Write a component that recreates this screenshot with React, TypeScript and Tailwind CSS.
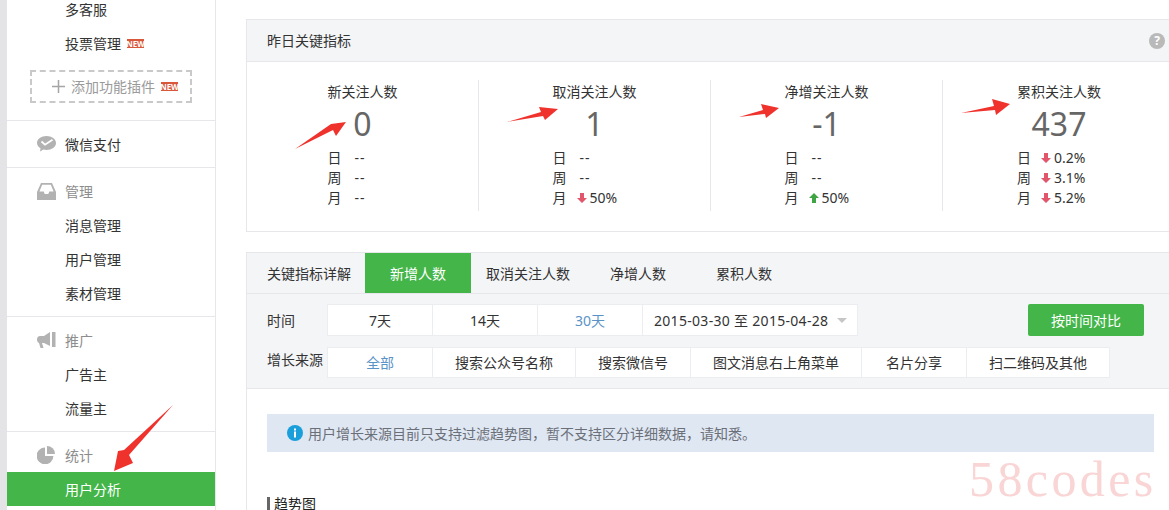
import React from 'react';

const fontStack = { fontFamily: '"Noto Sans", "Noto Sans CJK SC", sans-serif' };

const NewBadge: React.FC = () => (
  <span className="ml-[6px] inline-flex h-[9px] w-[17px] items-center justify-center bg-[#d9573a] text-[8px] font-bold leading-[9px] text-white">
    NEW
  </span>
);

const MenuRow: React.FC<{ label: string; badge?: boolean }> = ({ label, badge }) => (
  <div className="flex h-[34px] items-center pl-[58px] text-[14px] text-[#333]">
    {label}
    {badge && <NewBadge />}
  </div>
);

const GroupRow: React.FC<{ label: string; icon: React.ReactNode; dark?: boolean; className?: string }> = ({
  label,
  icon,
  dark,
  className,
}) => (
  <div className={`flex items-center pl-[30px] text-[14px] ${dark ? 'text-[#333]' : 'text-[#8d8d8d]'} ${className ?? 'h-[34px]'}`}>
    <span className="flex w-[28px] items-center">{icon}</span>
    {label}
  </div>
);

const PayIcon = (
  <svg width="19" height="16" viewBox="0 0 19 16" fill="#b2b2b2">
    <path d="M9.5 0C4.3 0 0 3 0 6.9c0 2.2 1.4 4.100 3.500 5.400L3 15.500l3.400-2c1 .3 2 .4 3.100.4 5.200 0 9.500-3.100 9.500-7S14.700 0 9.500 0Z" />
    <path d="M4.500 5.500 8 8.700l7.500-5" fill="none" stroke="#fff" strokeWidth="1.800" />
  </svg>
);

const InboxIcon = (
  <svg width="19" height="17" viewBox="0 0 19 17" fill="#b2b2b2">
    <path d="M4 0h11l4 9v8H0V9L4 0Zm1.200 1.800L2.400 8.500h4.300l1 2.500h3.600l1-2.500h4.300l-2.800-6.700H5.200Z" />
  </svg>
);

const MegaphoneIcon = (
  <svg width="19" height="17" viewBox="0 0 19 17" fill="#b2b2b2">
    <path d="M13 0v14L7 11H5l1.500 5H3.500L2 11C.8 10.700 0 9.300 0 7.500 0 5.500 1.200 4 3 4h4l6-4Z" />
    <rect x="15" y="0" width="3.500" height="15" />
  </svg>
);

const PieIcon = (
  <svg width="18" height="18" viewBox="0 0 18 18" fill="#b2b2b2">
    <path d="M8 1.500v8.500h8.400A8.400 8.400 0 1 1 8 1.500Z" />
    <path d="M10 0a8 8 0 0 1 8 8h-8V0Z" />
  </svg>
);

const Arrow: React.FC<{ dir: 'up' | 'down' }> = ({ dir }) => (
  <svg width="10" height="10" viewBox="0 0 10 10" fill={dir === 'up' ? '#3fa544' : '#e2566c'} className="shrink-0">
    {dir === 'up' ? <path d="M5 0l5 5H7v5H3V5H0l5-5Z" /> : <path d="M3 0h4v5h3l-5 5-5-5h3V0Z" />}
  </svg>
);

type Stat = { label: string; value: string; dir?: 'up' | 'down' };

const metrics: { title: string; value: string; stats: Stat[] }[] = [
  {
    title: '新关注人数',
    value: '0',
    stats: [
      { label: '日', value: '--' },
      { label: '周', value: '--' },
      { label: '月', value: '--' },
    ],
  },
  {
    title: '取消关注人数',
    value: '1',
    stats: [
      { label: '日', value: '--' },
      { label: '周', value: '--' },
      { label: '月', value: '50%', dir: 'down' },
    ],
  },
  {
    title: '净增关注人数',
    value: '-1',
    stats: [
      { label: '日', value: '--' },
      { label: '周', value: '--' },
      { label: '月', value: '50%', dir: 'up' },
    ],
  },
  {
    title: '累积关注人数',
    value: '437',
    stats: [
      { label: '日', value: '0.2%', dir: 'down' },
      { label: '周', value: '3.1%', dir: 'down' },
      { label: '月', value: '5.2%', dir: 'down' },
    ],
  },
];

const rangeTabs = [
  { label: '7天', width: 'w-[105px]' },
  { label: '14天', width: 'w-[105px]' },
  { label: '30天', width: 'w-[105px]', active: true },
];

const sourceTabs = [
  { label: '全部', width: 'w-[105px]', active: true },
  { label: '搜索公众号名称', width: 'w-[143px]' },
  { label: '搜索微信号', width: 'w-[115px]' },
  { label: '图文消息右上角菜单', width: 'w-[171px]' },
  { label: '名片分享', width: 'w-[105px]' },
  { label: '扫二维码及其他', width: 'w-[143px]' },
];

export default function App() {
  return (
    <div className="relative flex h-[510px] w-[1169px] overflow-hidden bg-white" style={fontStack}>
      <div className="w-[7px] shrink-0 bg-[#e4e4e6]" />

      {/* sidebar, scrolled a little so the first row is cut off */}
      <aside className="-mt-[8px] w-[209px] shrink-0 border-r border-[#e7e7eb]">
        <div className="h-[129px] border-b border-[#e7e7eb]">
          <MenuRow label="多客服" />
          <MenuRow label="投票管理" badge />
          <div className="mx-[23px] mt-[10px] flex h-[33px] items-center border-2 border-dashed border-[#c9c9c9] pl-[20px] text-[14px] text-[#9a9a9a]">
            <svg width="13" height="13" viewBox="0 0 13 13" stroke="#a5a5a5" strokeWidth="1.500" className="mr-[6px] shrink-0">
              <path d="M6.500 0v13M0 6.500h13" />
            </svg>
            添加功能插件
            <NewBadge />
          </div>
        </div>
        <div className="border-b border-[#e7e7eb]">
          <GroupRow label="微信支付" icon={PayIcon} dark className="h-[46px]" />
        </div>
        <div className="h-[149px] border-b border-[#e7e7eb] pt-[6px]">
          <GroupRow label="管理" icon={InboxIcon} />
          <MenuRow label="消息管理" />
          <MenuRow label="用户管理" />
          <MenuRow label="素材管理" />
        </div>
        <div className="h-[115px] border-b border-[#e7e7eb] pt-[6px]">
          <GroupRow label="推广" icon={MegaphoneIcon} />
          <MenuRow label="广告主" />
          <MenuRow label="流量主" />
        </div>
        <div className="pt-[6px]">
          <GroupRow label="统计" icon={PieIcon} />
          <div className="flex h-[34px] items-center bg-[#44b549] pl-[58px] text-[14px] text-white">用户分析</div>
        </div>
      </aside>

      <main className="min-w-0 flex-1 overflow-hidden pl-[30px] pt-[19px]">
        <section className="h-[213px] w-[940px] border border-[#e7e7eb]">
          <div className="flex h-[42px] items-center justify-between border-b border-[#e7e7eb] bg-[#f4f5f7] pl-[20px] text-[14px] text-[#333]">
            昨日关键指标
            <span className="mr-[20px] flex h-[16px] w-[16px] items-center justify-center rounded-full bg-[#b9b9b9] text-[12px] font-bold leading-none text-white">
              ?
            </span>
          </div>
          <div className="mt-[18px] flex">
            {metrics.map((m, i) => (
              <div
                key={m.title}
                className={`flex h-[131px] w-[232px] shrink-0 justify-center ${i < 3 ? 'border-r border-[#e7e7eb]' : ''}`}
              >
                <div className="pt-[1px] text-[14px] text-[#333]">
                  <div className="h-[22px] leading-[22px]">{m.title}</div>
                  <div className="h-[41px] text-center text-[32px] leading-[41px] text-[#666]">{m.value}</div>
                  <div className="mt-[4px]">
                    {m.stats.map((s) => (
                      <div key={s.label} className="flex h-[20px] items-center leading-[20px]">
                        <span className="w-[24px]">{s.label}</span>
                        {s.dir ? (
                          <>
                            <Arrow dir={s.dir} />
                            <span className="ml-[3px]">{s.value}</span>
                          </>
                        ) : (
                          <span className="ml-[3px] tracking-[1px]">{s.value}</span>
                        )}
                      </div>
                    ))}
                  </div>
                </div>
              </div>
            ))}
          </div>
        </section>

        <section className="mt-[20px] w-[940px] border border-b-0 border-[#e7e7eb]">
          <div className="flex h-[41px] items-center border-b border-[#e7e7eb] bg-[#f4f5f7] pl-[20px] text-[14px] text-[#333]">
            <span className="w-[98px]">关键指标详解</span>
            <span className="flex h-[40px] w-[106px] items-center justify-center bg-[#44b549] text-white">新增人数</span>
            <span className="ml-[15px]">取消关注人数</span>
            <span className="ml-[40px]">净增人数</span>
            <span className="ml-[50px]">累积人数</span>
          </div>
          <div className="h-[95px] border-b border-[#e7e7eb] bg-[#f4f5f7] pl-[20px] pt-[10px] text-[14px] text-[#333]">
            <div className="flex h-[32px] items-center">
              <span className="w-[60px]">时间</span>
              <div className="flex h-full border border-r-0 border-[#ecedf0]">
                {rangeTabs.map((t) => (
                  <span
                    key={t.label}
                    className={`flex h-full ${t.width} items-center justify-center border-r border-[#ecedf0] bg-white ${t.active ? 'text-[#5b93c7]' : ''}`}
                  >
                    {t.label}
                  </span>
                ))}
              </div>
              <span className="flex h-full w-[215px] items-center border border-l-0 border-[#ecedf0] bg-white pl-[11px] tracking-[0.3px]">
                2015-03-30 至 2015-04-28
                <span className="ml-[9px] h-0 w-0 border-x-[5px] border-t-[5px] border-x-transparent border-t-[#c6c6c6]" />
              </span>
              <span className="ml-[170px] flex h-full w-[116px] items-center justify-center rounded-[2px] bg-[#44b549] text-white">
                按时间对比
              </span>
            </div>
            <div className="mt-[11px] flex h-[31px] items-center">
              <span className="w-[60px] pb-[6px]">增长来源</span>
              <div className="flex h-full border border-r-0 border-[#ecedf0]">
                {sourceTabs.map((t) => (
                  <span
                    key={t.label}
                    className={`flex h-full ${t.width} items-center justify-center border-r border-[#ecedf0] bg-white ${t.active ? 'text-[#5b93c7]' : ''}`}
                  >
                    {t.label}
                  </span>
                ))}
              </div>
            </div>
          </div>
          <div className="px-[20px] pt-[25px]">
            <div className="flex h-[38px] w-[887px] items-center bg-[#dfe7f3] pl-[20px] text-[14px] text-[#6b6f78]">
              <svg width="16" height="16" viewBox="0 0 16 16" className="mr-[5px] shrink-0">
                <circle cx="8" cy="8" r="8" fill="#1a9fdb" />
                <rect x="7" y="6.500" width="2" height="6" fill="#fff" />
                <rect x="7" y="3.500" width="2" height="2" fill="#fff" />
              </svg>
              用户增长来源目前只支持过滤趋势图，暂不支持区分详细数据，请知悉。
            </div>
            <div className="mt-[45px] flex h-[14px] items-center border-l-[3px] border-[#666] pl-[4px] text-[14px] leading-none text-[#222]">
              趋势图
            </div>
          </div>
        </section>
      </main>

      {/* annotation layer drawn on top of the screenshot */}
      <svg width="1169" height="510" viewBox="0 0 1169 510" className="pointer-events-none absolute left-0 top-0" fill="#f0322d">
        <polygon points="295,149 331,124 346,122 336,136 333,130" />
        <polygon points="507,122 541,112 539,107 558,109 545,120 543,116" />
        <polygon points="739,117 763,110 761,104 779,108 766,118 765,114" />
        <polygon points="961,113 994,106 992,99 1010,104 996,115 995,110" />
        <polygon points="173,405 129,455 133,463 114,471 118,451 124,450" />
      </svg>

      <span className="pointer-events-none absolute left-[969px] top-[449px] font-['Liberation_Serif'] text-[50px] leading-[60px] tracking-[3.4px] text-[#f9d5d5]">
        58codes
      </span>
    </div>
  );
}
